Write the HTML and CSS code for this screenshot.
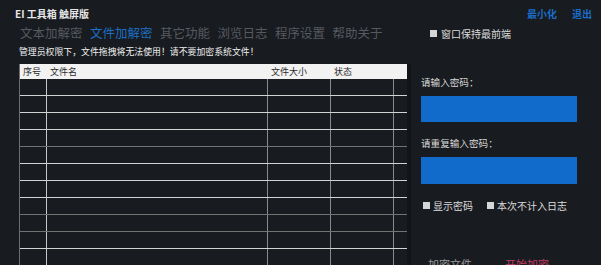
FILE: index.html
```html
<!DOCTYPE html>
<html>
  <head>
    <title>EI 工具箱 触屏版</title>
    <link rel="stylesheet" href="styles.css">
  </head>
  <body>
    <div class="app">
      <div class="titlebar">
        <div class="title">EI 工具箱 触屏版</div>
        <div class="win-btns">
          <span>最小化</span>
          <span>退出</span>
        </div>
      </div>

      <div class="main">
        <div class="left">
          <div class="tabs">
            <span class="tab">文本加解密</span>
            <span class="tab active">文件加解密</span>
            <span class="tab">其它功能</span>
            <span class="tab">浏览日志</span>
            <span class="tab">程序设置</span>
            <span class="tab">帮助关于</span>
          </div>
          <div class="warning">管理员权限下，文件拖拽将无法使用！请不要加密系统文件！</div>

          <div class="file-list">
            <div class="row head">
              <div class="cell c-no">序号</div>
              <div class="cell c-name">文件名</div>
              <div class="cell c-size">文件大小</div>
              <div class="cell c-state">状态</div>
              <div class="cell c-pad"></div>
            </div>
            <div class="row"><div class="cell c-no"></div><div class="cell c-name"></div><div class="cell c-size"></div><div class="cell c-state"></div><div class="cell c-pad"></div></div>
            <div class="row"><div class="cell c-no"></div><div class="cell c-name"></div><div class="cell c-size"></div><div class="cell c-state"></div><div class="cell c-pad"></div></div>
            <div class="row"><div class="cell c-no"></div><div class="cell c-name"></div><div class="cell c-size"></div><div class="cell c-state"></div><div class="cell c-pad"></div></div>
            <div class="row dim"><div class="cell c-no"></div><div class="cell c-name"></div><div class="cell c-size"></div><div class="cell c-state"></div><div class="cell c-pad"></div></div>
            <div class="row"><div class="cell c-no"></div><div class="cell c-name"></div><div class="cell c-size"></div><div class="cell c-state"></div><div class="cell c-pad"></div></div>
            <div class="row"><div class="cell c-no"></div><div class="cell c-name"></div><div class="cell c-size"></div><div class="cell c-state"></div><div class="cell c-pad"></div></div>
            <div class="row"><div class="cell c-no"></div><div class="cell c-name"></div><div class="cell c-size"></div><div class="cell c-state"></div><div class="cell c-pad"></div></div>
            <div class="row dim"><div class="cell c-no"></div><div class="cell c-name"></div><div class="cell c-size"></div><div class="cell c-state"></div><div class="cell c-pad"></div></div>
            <div class="row dim"><div class="cell c-no"></div><div class="cell c-name"></div><div class="cell c-size"></div><div class="cell c-state"></div><div class="cell c-pad"></div></div>
            <div class="row"><div class="cell c-no"></div><div class="cell c-name"></div><div class="cell c-size"></div><div class="cell c-state"></div><div class="cell c-pad"></div></div>
            <div class="row"><div class="cell c-no"></div><div class="cell c-name"></div><div class="cell c-size"></div><div class="cell c-state"></div><div class="cell c-pad"></div></div>
          </div>
        </div>

        <div class="right">
          <label class="check pin"><span class="box"></span>窗口保持最前端</label>

          <div class="field-label first">请输入密码：</div>
          <div class="pwd"></div>

          <div class="field-label">请重复输入密码：</div>
          <div class="pwd tall"></div>

          <div class="checks">
            <label class="check"><span class="box"></span>显示密码</label>
            <label class="check"><span class="box"></span>本次不计入日志</label>
          </div>

          <div class="actions">
            <span class="act">加密文件</span>
            <span class="act red">开始加密</span>
          </div>
        </div>
      </div>
    </div>
  </body>
</html>
```

FILE: styles.css
```css
body {
  margin: 0;
  background-color: #181b1f;
  font-family: "Noto Sans CJK SC", "Liberation Sans", sans-serif;
  color: #dcdcdc;
}

.app {
  width: 601px;
  height: 265px;
  overflow: hidden;
}

.titlebar {
  display: flex;
  justify-content: space-between;
  align-items: center;
  height: 16px;
  padding: 6px 9px 1px 15px;
}

.title {
  font-size: 10px;
  font-weight: bold;
  color: #e6e6e6;
  line-height: 16px;
}

.win-btns {
  display: flex;
  gap: 15px;
  font-size: 10px;
  font-weight: bold;
  color: #1a6cc6;
  margin-top: -2px;
}

.main {
  display: flex;
}

.left {
  width: 391px;
  padding-left: 19px;
}

.tabs {
  display: flex;
  gap: 7.5px;
  padding-left: 1px;
  height: 20px;
  line-height: 20px;
  font-size: 12.5px;
  color: #565a60;
}

.tab.active {
  color: #1d6fc4;
}

.warning {
  margin-top: 2px;
  height: 14px;
  line-height: 14px;
  font-size: 8.9px;
  color: #f0f0f0;
}

.file-list {
  margin-top: 5px;
  width: 387px;
  border-left: 1px solid #6e6e6e;
  border-right: 4px solid #121417;
}

.row {
  display: flex;
  height: 17px;
  box-sizing: border-box;
  border-bottom: 1px solid #d4d4d4;
}

.row.dim {
  border-bottom-color: #737373;
}

.row.head {
  height: 15px;
  border-bottom: none;
  background-color: #f2f2f2;
  color: #2a2a2a;
  font-size: 9px;
  line-height: 15px;
}

.cell {
  box-sizing: border-box;
  border-right: 1px solid #8a8a8a;
  padding-left: 3px;
}

.row.head .cell {
  border-right-color: #f2f2f2;
}

.c-no {
  width: 27px;
  border-right-color: #c8c8c8;
}

.c-name {
  width: 221px;
}

.c-size {
  width: 63px;
}

.c-state {
  width: 63px;
}

.c-pad {
  flex: 1;
  border-right: none;
}

.right {
  padding-left: 11px;
  width: 170px;
}

.check {
  display: flex;
  align-items: center;
  font-size: 10px;
  color: #dcdcdc;
  height: 14px;
}

.box {
  width: 7px;
  height: 7px;
  background-color: #d6d6d6;
  margin-right: 3px;
}

.pin {
  height: 20px;
  padding-left: 9px;
}

.pin .box {
  margin-right: 4px;
}

.field-label {
  margin-top: 14px;
  height: 14px;
  line-height: 14px;
  font-size: 9.6px;
  color: #d8d8d8;
}

.field-label.first {
  margin-top: 32px;
}

.pwd {
  margin-top: 7px;
  width: 156px;
  height: 26px;
  background-color: #106bca;
}

.pwd.tall {
  height: 27px;
}

.checks {
  display: flex;
  gap: 14px;
  margin-top: 14px;
  padding-left: 2px;
}

.actions {
  display: flex;
  gap: 33px;
  margin-top: 45px;
  padding-left: 7px;
  font-size: 11px;
  line-height: 14px;
}

.act {
  color: #9a9a9a;
}

.act.red {
  color: #c23a62;
}
```
